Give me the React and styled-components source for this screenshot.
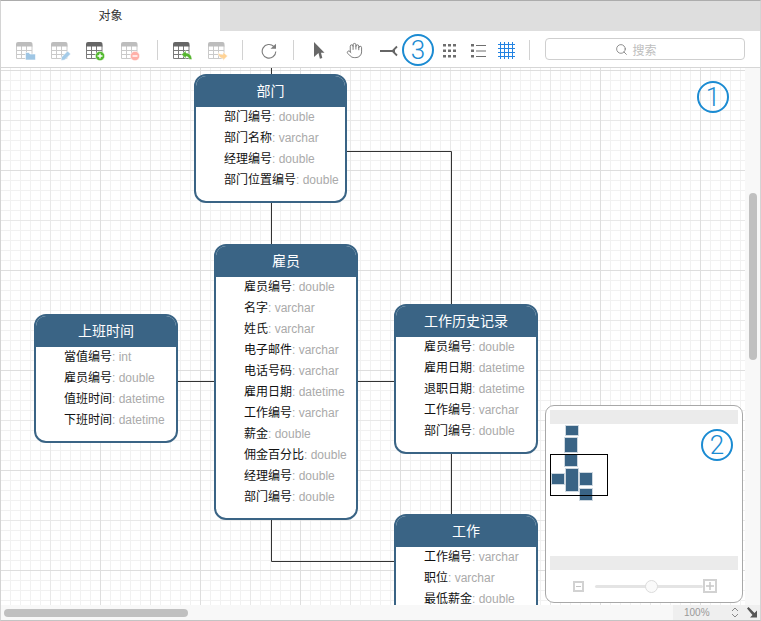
import React from 'react'
import styled, { createGlobalStyle } from 'styled-components'
import { Hand, Search } from 'lucide-react'

const Global = createGlobalStyle`
  html, body { margin: 0; padding: 0; background: #fff; }
  body { font-family: "Liberation Sans", "Noto Sans CJK SC", sans-serif; }
`

const Window = styled.div`
  position: relative;
  box-sizing: border-box;
  width: 761px;
  height: 621px;
  overflow: hidden;
  display: flex;
  flex-direction: column;
  border-top: 1px solid #acacac;
  border-left: 1px solid #d4d4d4;
  border-right: 1px solid #d4d4d4;
  border-bottom: 1px solid #c4c4c4;
`
const TabBar = styled.div`
  height: 30px;
  display: flex;
  background: #dedede;
`
const Tab = styled.div`
  width: 219px;
  background: #fff;
  font-size: 12px;
  color: #333;
  text-align: center;
  line-height: 30px;
`
const Toolbar = styled.div`
  box-sizing: border-box;
  flex: none;
  height: 37px;
  padding-left: 15px;
  display: flex;
  align-items: center;
  background: #fff;
  border-bottom: 1px solid #d6d6d6;
`
const Tool = styled.div`
  flex: none;
  width: ${p => p.$w}px;
  margin-top: ${p => p.$dy ?? 3}px;
  display: flex;
  align-items: center;
`
const Sep = styled.div`
  flex: none;
  width: 1px;
  height: 20px;
  margin-top: 2px;
  background: #d2d2d2;
  margin-right: ${p => p.$after}px;
`
const SearchBox = styled.div`
  box-sizing: border-box;
  width: 200px;
  height: 22px;
  padding-right: 18px;
  border: 1px solid #cfcfcf;
  border-radius: 4px;
  display: flex;
  align-items: center;
  justify-content: center;
  gap: 4px;
  font-size: 12px;
  color: #bdbdbd;
`
const Middle = styled.div`
  flex: 1;
  min-height: 0;
  display: flex;
`
const Canvas = styled.div`
  position: relative;
  flex: 1;
  overflow: hidden;
  background-color: #fff;
  background-image:
    linear-gradient(#dedede 1px, transparent 1px),
    linear-gradient(90deg, #dedede 1px, transparent 1px),
    linear-gradient(#e8e8e8 1px, transparent 1px),
    linear-gradient(90deg, #e8e8e8 1px, transparent 1px),
    linear-gradient(#f1f1f1 1px, transparent 1px),
    linear-gradient(90deg, #f1f1f1 1px, transparent 1px);
  background-size: 100px 100px, 100px 100px, 50px 50px, 50px 50px, 10px 10px, 10px 10px;
  background-position: -1px 2px;
`
const Links = styled.svg`
  position: absolute;
  left: 0;
  top: 0;
`
const EntityBox = styled.div`
  position: absolute;
  box-sizing: border-box;
  left: ${p => p.$x - 1}px;
  top: ${p => p.$y - 68}px;
  width: ${p => p.$w}px;
  background: #fff;
  border: 2px solid #3a6485;
  border-radius: 12px;
  overflow: hidden;
  padding-bottom: 10px;
`
const EntityTitle = styled.div`
  height: 31px;
  background: #3a6485;
  color: #fff;
  font-size: 14px;
  line-height: 30px;
  text-align: center;
`
const Field = styled.div`
  height: 21px;
  line-height: 21px;
  padding-left: 28px;
  font-size: 12px;
  white-space: nowrap;
  color: #aaa;
`
const FieldName = styled.span`
  color: #111;
`
const MiniMap = styled.div`
  position: absolute;
  right: 2px;
  bottom: 2px;
  box-sizing: border-box;
  width: 198px;
  height: 198px;
  padding: 4px;
  background: #fff;
  border: 1px solid #a8a8a8;
  border-radius: 9px;
  display: flex;
  flex-direction: column;
`
const MapBand = styled.div`
  flex: none;
  height: 14px;
  background: #ebebeb;
`
const MapArea = styled.div`
  position: relative;
  flex: none;
  height: 132px;
`
const MapNode = styled.div`
  position: absolute;
  left: ${p => p.$x - 550}px;
  top: ${p => p.$y - 424}px;
  width: ${p => p.$w}px;
  height: ${p => p.$h}px;
  background: #3a6485;
  box-shadow: 0 0 0 1px rgba(58, 100, 133, 0.25);
`
const MapViewport = styled.div`
  position: absolute;
  box-sizing: border-box;
  left: 0;
  top: 30px;
  width: 58px;
  height: 42px;
  border: 1px solid #000;
`
const ZoomRow = styled.div`
  flex: 1;
  display: flex;
  align-items: center;
  padding: 4px 0 0 23px;
`
const Slider = styled.div`
  position: relative;
  width: 108px;
  height: 3px;
  margin-left: 11px;
  background: #e4e4e4;
  border-radius: 2px;
`
const SliderKnob = styled.div`
  position: absolute;
  left: 50px;
  top: -5px;
  box-sizing: border-box;
  width: 13px;
  height: 13px;
  border-radius: 50%;
  background: #fafafa;
  border: 1px solid #dcdcdc;
`
const VTrack = styled.div`
  flex: none;
  box-sizing: border-box;
  width: 15px;
  background: #f8f8f8;
  padding-left: 4px;
`
const VThumb = styled.div`
  width: 8px;
  height: 167px;
  margin-top: 125px;
  background: #c0c0c0;
  border-radius: 4px;
`
const HTrack = styled.div`
  flex: none;
  height: 15px;
  display: flex;
  align-items: center;
  background: #f8f8f8;
  padding-left: 3px;
`
const HThumb = styled.div`
  width: 184px;
  height: 8px;
  background: #c0c0c0;
  border-radius: 4px;
`
const StatusBox = styled.div`
  margin-left: auto;
  width: 87px;
  height: 15px;
  display: flex;
  align-items: center;
  background: #efefef;
  font-size: 10px;
  color: #999;
  padding-left: 11px;
  box-sizing: border-box;
`
const StatusSlot = styled.div`
  flex: none;
  width: ${p => p.$w}px;
  display: flex;
  align-items: center;
`
const Callout = styled.div`
  position: absolute;
  box-sizing: border-box;
  left: ${p => p.$x - 1}px;
  top: ${p => p.$y - 1}px;
  width: 32px;
  height: 32px;
  border: 2px solid #1b8bd2;
  border-radius: 50%;
  color: #1b8bd2;
  font-family: Roboto, sans-serif;
  font-weight: 300;
  font-size: 26px;
  line-height: 28px;
  text-align: center;
`

const L = { head: '#bdbdbd', line: '#cacaca' }
const D = { head: '#666', line: '#7a7a7a' }

const TableIcon = ({ tone, children }) => (
  <svg width="20" height="19" viewBox="0 0 20 19">
    <path d="M.5 3.5h15.500v13H.5z M.5 8.500h15.500 M.5 12.500h15.500 M5.500 4v12 M10.500 4v12" fill="#fff" stroke={tone.line} />
    <path d="M0 2a2 2 0 0 1 2-2h12.500a2 2 0 0 1 2 2v2.500H0z" fill={tone.head} />
    {children}
  </svg>
)

const Folder = () => <path d="M9.500 18V10.500h3.500l1 1.500h5.500v6z" fill="#9fc6e4" stroke="#fff" strokeWidth=".6" />
const Pencil = () => <path d="M10 18.500l.6-3.500 6-6 3 3-6 6z" fill="#a4cbe8" stroke="#fff" strokeWidth=".6" />
const PlusBadge = () => (
  <g>
    <circle cx="14" cy="14" r="4.700" fill="#52b92e" stroke="#fff" strokeWidth=".6" />
    <path d="M11.500 14h5M14 11.500v5" stroke="#fff" strokeWidth="1.400" />
  </g>
)
const MinusBadge = () => (
  <g>
    <circle cx="14" cy="14" r="4.700" fill="#ffb0a8" stroke="#fff" strokeWidth=".6" />
    <path d="M11.500 14h5" stroke="#fff" strokeWidth="1.400" />
  </g>
)
const Undo = () => <path d="M8.500 12.500l4.500-4v2.500c3.500 0 5.700 2.200 6 6.500h-2.800c-.3-2-1.300-3-3.200-3v2z" fill="#56b52f" stroke="#fff" strokeWidth=".5" />
const Redo = () => <path d="M19.500 14l-4.500-4v2.500c-1.800.2-3.500-.3-5-2 .2 3.500 2 5.800 5 6v2z" fill="#ffd396" stroke="#fff" strokeWidth=".5" />

const Refresh = () => (
  <svg width="16" height="16" viewBox="0 0 16 16" fill="none">
    <path d="M12.800 3.500A6.800 6.800 0 1 0 14.800 8.500" stroke="#7d7d7d" strokeWidth="1.100" />
    <path d="M9.500 5.800L15 .8v5z" fill="#7d7d7d" />
  </svg>
)
const Pointer = () => (
  <svg width="11" height="17" viewBox="0 0 11 17">
    <path d="M0 0l10.500 10.800H7l1.300 5.200-2.400.7L4.500 11 0 15z" fill="#686868" />
  </svg>
)
const CrowFoot = () => (
  <svg width="18" height="12" viewBox="0 0 18 12" fill="none">
    <path d="M0 6h15" stroke="#666" strokeWidth="2" />
    <path d="M17 1.500L12.500 6l4.500 4.500" stroke="#666" strokeWidth="1.800" />
  </svg>
)
const Dots = () => (
  <svg width="14" height="14" viewBox="0 0 14 14" fill="#6e6e6e">
    {[0, 5, 10].flatMap(x => [0, 5.500, 11].map(y => <rect key={`${x}-${y}`} x={x} y={y} width="3" height="2.500" />))}
  </svg>
)
const ListLines = () => (
  <svg width="15" height="14" viewBox="0 0 15 14" fill="#6e6e6e">
    {[0, 5.500, 11].map(y => (
      <g key={y}>
        <rect x="0" y={y} width="3" height="2.500" />
        <rect x="5" y={y + 1} width="10" height="1" />
      </g>
    ))}
  </svg>
)
const GridLines = () => (
  <svg width="17" height="17" viewBox="0 0 17 17" stroke="#2383e2">
    {[2.5, 6.500, 10.500, 14.500].map(p => (
      <g key={p}>
        <path d={`M${p} 0v17`} />
        <path d={`M0 ${p}h17`} />
      </g>
    ))}
  </svg>
)
const ZoomOut = () => (
  <svg width="11" height="11" viewBox="0 0 11 11" fill="none">
    <rect x="1" y="1" width="9" height="9" stroke="#d2d2d2" strokeWidth="2" />
    <path d="M3 5.500h5" stroke="#c4c4c4" />
  </svg>
)
const ZoomIn = () => (
  <svg width="14" height="14" viewBox="0 0 14 14" fill="none">
    <rect x="1" y="1" width="12" height="12" stroke="#d2d2d2" strokeWidth="2" />
    <path d="M3 7h8M7 3v8" stroke="#c8c8c8" strokeWidth="1.500" />
  </svg>
)
const Stepper = () => (
  <svg width="8" height="11" viewBox="0 0 8 11" fill="none" stroke="#888">
    <path d="M1 4l3-3 3 3M1 7l3 3 3-3" />
  </svg>
)
const ResizeArrow = () => (
  <svg width="11" height="11" viewBox="0 0 11 11" fill="#555">
    <path d="M0 1.500L1.500 0l6 6L10 3.500V10.500H3l2.500-2.500z" />
  </svg>
)

const entities = [
  { title: '部门', x: 194, y: 74, w: 153, fields: [['部门编号', 'double'], ['部门名称', 'varchar'], ['经理编号', 'double'], ['部门位置编号', 'double']] },
  { title: '雇员', x: 214, y: 244, w: 144, fields: [['雇员编号', 'double'], ['名字', 'varchar'], ['姓氏', 'varchar'], ['电子邮件', 'varchar'], ['电话号码', 'varchar'], ['雇用日期', 'datetime'], ['工作编号', 'varchar'], ['薪金', 'double'], ['佣金百分比', 'double'], ['经理编号', 'double'], ['部门编号', 'double']] },
  { title: '上班时间', x: 34, y: 314, w: 144, fields: [['當值编号', 'int'], ['雇员编号', 'double'], ['值班时间', 'datetime'], ['下班时间', 'datetime']] },
  { title: '工作历史记录', x: 394, y: 304, w: 144, fields: [['雇员编号', 'double'], ['雇用日期', 'datetime'], ['退职日期', 'datetime'], ['工作编号', 'varchar'], ['部门编号', 'double']] },
  { title: '工作', x: 394, y: 514, w: 144, fields: [['工作编号', 'varchar'], ['职位', 'varchar'], ['最低薪金', 'double']] },
]

const links = [
  'M271.500 68V74',
  'M271.500 203V244',
  'M347 151.500H451.500V304',
  'M178 381.500H214',
  'M358 381.500H394',
  'M451.500 454V514',
  'M271.500 520V561.500H394',
]

const mapNodes = [
  { x: 566, y: 426, w: 12, h: 9 },
  { x: 565, y: 438, w: 12, h: 14 },
  { x: 565, y: 455, w: 12, h: 11 },
  { x: 552, y: 474, w: 12, h: 10 },
  { x: 566, y: 469, w: 12, h: 22 },
  { x: 580, y: 473, w: 12, h: 12 },
  { x: 580, y: 489, w: 12, h: 11 },
]

const Entity = ({ title, x, y, w, fields }) => (
  <EntityBox $x={x} $y={y} $w={w}>
    <EntityTitle>{title}</EntityTitle>
    {fields.map(([name, type]) => (
      <Field key={name}>
        <FieldName>{name}</FieldName>: {type}
      </Field>
    ))}
  </EntityBox>
)

export default function App() {
  return (
    <Window>
      <Global />
      <TabBar>
        <Tab>对象</Tab>
      </TabBar>
      <Toolbar>
        <Tool $w={35} $dy={5}><TableIcon tone={L}><Folder /></TableIcon></Tool>
        <Tool $w={35} $dy={5}><TableIcon tone={L}><Pencil /></TableIcon></Tool>
        <Tool $w={35} $dy={5}><TableIcon tone={D}><PlusBadge /></TableIcon></Tool>
        <Tool $w={36} $dy={5}><TableIcon tone={L}><MinusBadge /></TableIcon></Tool>
        <Sep $after={15} />
        <Tool $w={35} $dy={5}><TableIcon tone={D}><Undo /></TableIcon></Tool>
        <Tool $w={34} $dy={5}><TableIcon tone={L}><Redo /></TableIcon></Tool>
        <Sep $after={18} />
        <Tool $w={32}><Refresh /></Tool>
        <Sep $after={20} />
        <Tool $w={32}><Pointer /></Tool>
        <Tool $w={34}><Hand size={17} strokeWidth={1.2} color="#666" /></Tool>
        <Tool $w={63}><CrowFoot /></Tool>
        <Tool $w={28}><Dots /></Tool>
        <Tool $w={27}><ListLines /></Tool>
        <Tool $w={31}><GridLines /></Tool>
        <Sep $after={15} />
        <SearchBox>
          <Search size={13} color="#777" strokeWidth={1.5} />
          搜索
        </SearchBox>
      </Toolbar>
      <Middle>
        <Canvas>
          <Links width="744" height="537" viewBox="1 68 744 537" fill="none" stroke="#333">
            {links.map(d => <path key={d} d={d} />)}
          </Links>
          {entities.map(e => <Entity key={e.title} {...e} />)}
          <MiniMap>
            <MapBand />
            <MapArea>
              {mapNodes.map(n => <MapNode key={`${n.x}-${n.y}`} $x={n.x} $y={n.y} $w={n.w} $h={n.h} />)}
              <MapViewport />
            </MapArea>
            <MapBand />
            <ZoomRow>
              <ZoomOut />
              <Slider><SliderKnob /></Slider>
              <ZoomIn />
            </ZoomRow>
          </MiniMap>
        </Canvas>
        <VTrack><VThumb /></VTrack>
      </Middle>
      <HTrack>
        <HThumb />
        <StatusBox>
          <StatusSlot $w={47}>100%</StatusSlot>
          <StatusSlot $w={16}><Stepper /></StatusSlot>
          <ResizeArrow />
        </StatusBox>
      </HTrack>
      <Callout $x={697} $y={81}>1</Callout>
      <Callout $x={701} $y={429}>2</Callout>
      <Callout $x={402} $y={34}>3</Callout>
    </Window>
  )
}
